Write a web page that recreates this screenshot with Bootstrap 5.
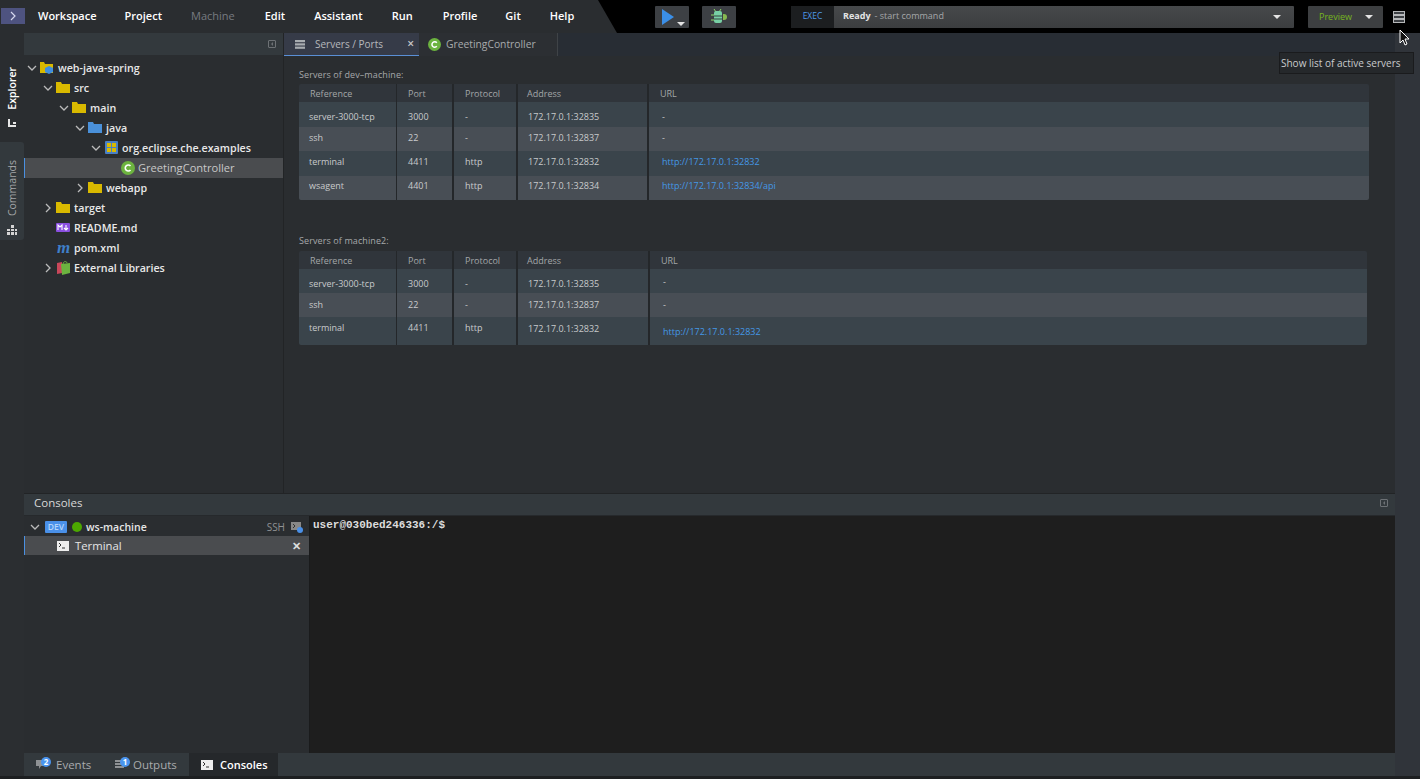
<!DOCTYPE html>
<html lang="en">
<head>
<meta charset="utf-8">
<title>Eclipse Che</title>
<link rel="stylesheet" href="https://cdn.jsdelivr.net/npm/bootstrap@5.3.0/dist/css/bootstrap.min.css">
<style>
html,body{height:100%;margin:0;overflow:hidden;background:#24272a}
body{font-family:"Open Sans","Liberation Sans",sans-serif;font-size:12px;color:#dbdbdb;line-height:1.2}
.ide-root{width:1420px;height:779px;position:relative;overflow:hidden}
.top-strip{height:33px;background:#000}
.menu-zone{width:617px;height:33px;background:#2a2d30;clip-path:polygon(0 0,598px 0,617px 33px,0 33px);padding-left:1px;flex:none}
.menu-toggle{width:24px;height:16px;margin:8px 0 0;background:#4e5380;color:#d5d8ee;display:flex;align-items:center;justify-content:center}
.menu-list{height:33px;padding-bottom:2px}
.menu-entry{font-size:11px;font-weight:600;color:#fff;white-space:nowrap}
.menu-entry.off{color:#777b80;font-weight:400}
.tool-btn{height:22px;background:#3d4044;display:flex;align-items:center;justify-content:center;position:relative;border-radius:1px}
.exec-box{height:22px;margin-left:55px;background:linear-gradient(#47494b,#3c3e40);display:flex;align-items:center;color:#a5a7a9;font-size:9px;border-radius:1px}
.exec-tag{height:22px;background:#1c1e20;color:#4f9ae8;font-size:8.500px;display:flex;align-items:center;justify-content:center}
.tri-down{width:0;height:0;border-left:4px solid transparent;border-right:4px solid transparent;border-top:4px solid #e4e4e4;display:block}
.preview-box{height:22px;background:#3d3f41;color:#76b520;font-size:9px;display:flex;align-items:center;border-radius:1px}
.main-zone{height:743px}
.side-rail{width:24px;background:#2b2e31;flex:none}
.rail-tab{width:24px;display:flex;flex-direction:column;align-items:center}
.rail-tab.act{height:109px;padding-top:34px;background:#2a2d30;color:#fff}
.rail-tab.idle{height:98px;padding-top:18px;background:#33393d;color:#a4a6a8;border-radius:0 3px 3px 0}
.rail-word{writing-mode:vertical-rl;transform:rotate(180deg);font-size:10.500px}
.rail-tab.act .rail-word{font-weight:600}
.work-col{flex:1;min-width:0}
.upper-zone{height:460px}
.tree-pane{width:260px;background:#2a2d30;border-right:1px solid #222426;flex:none;display:flex;flex-direction:column}
.tree-head{height:22px;background:#33393d;display:flex;justify-content:flex-end;align-items:center;padding-right:7px;flex:none}
.mini-box{width:8px;height:8px;border:1px solid #6d7175;border-radius:1px;display:block;position:relative}
.mini-box::after{content:"";position:absolute;left:2px;top:1px;width:0;height:0;border-top:2px solid transparent;border-bottom:2px solid transparent;border-right:2px solid #6d7175}
.tree-list{padding-top:3px}
.tree-row{height:20px;display:flex;align-items:center;color:#e8e8e8;font-size:10.700px;font-weight:600;white-space:nowrap}
.tree-row.sel{background:#4a4c4f;color:#c8c8c8;border-left:1px solid #4a90e2;width:259px}
.chev{width:16px;display:flex;justify-content:center;flex:none}
.node-icon{width:15px;height:14px;margin-right:3px;flex:none;display:block}
.pom-letter{width:15px;margin-right:3px;color:#3f7fc9;font:italic 700 17px/14px "Liberation Serif",serif;text-align:center;flex:none}
.editor-pane{flex:1;min-width:0;background:#2a2d30;display:flex;flex-direction:column}
.tab-strip{height:23px;background:#282d34;display:flex;flex:none}
.ed-tab{display:flex;align-items:center;height:23px;color:#b6b9bc;font-size:10px}
.ed-tab.on{width:135px;background:#363b48;border-bottom:1px solid #5a8fd6;padding-left:11px;position:relative}
.ed-tab.two{width:139px;background:#2c2f33;padding-left:9px;border-right:1px solid #3f4347;font-size:10.300px;color:#a8abad}
.ed-tab .xmark{position:absolute;right:5px;top:4px;font-size:12px;line-height:14px;color:#c8c8c8;font-weight:600}
.server-area{flex:1;padding:0 0 0 15px;font-size:9px;color:#b3b5b7}
.srv-title{height:13px;font-size:9px;letter-spacing:.1px;color:#a6a8aa;line-height:13px}
.srv-table{border-collapse:separate;border-spacing:0;table-layout:fixed;font-size:9px;color:#c8cacc;border-radius:2px;overflow:hidden}
.srv-table th{height:18px;padding:2px 0 0 11px;background:#30353b;color:#a3a6a8;font-weight:400;border-right:2px solid #24272a}
.srv-table td{padding:0 0 0 10px;border-right:2px solid #24272a}
.srv-table th:last-child,.srv-table td:last-child{border-right:0}
.srv-table tr.dk td{background:#3a444b}
.srv-table tr.lt td{background:#484e55}
.srv-table th:first-child,.srv-table td:first-child{border-right-width:1px}
.srv-table td:nth-child(2),.srv-table td:nth-child(3){padding-left:11px}
.srv-table th:nth-child(4){padding-left:9px}
.srv-table td:last-child{padding-left:13px}
.srv-table td.up1{padding-bottom:2px}
.srv-table td.up2{padding-bottom:4px}
.srv-table td.up3{padding-bottom:6px}
.srv-table td.dn1{padding-top:2px}
.srv-table td.dn3{padding-top:6px}
.srv-table td.wsl{padding-left:10px}
.srv-link{color:#4498e6;text-decoration:none}
.lower-zone{height:283px;background:#2a2d30;display:flex;flex-direction:column;border-top:1px solid #222426}
.cons-head{height:22px;background:#33393d;display:flex;align-items:center;justify-content:space-between;padding:0 7px 3px 10px;color:#d8d8d8;font-size:11.500px;flex:none;border-bottom:1px solid #26292c}
.cons-body{flex:1;min-height:0}
.cons-tree{width:286px;flex:none;background:#2a2d30;border-right:1px solid #1a1b1c}
.cons-row{height:20px;padding-top:2px;display:flex;align-items:center;font-size:10.500px;color:#e6e6e6;font-weight:600}
.cons-sel{height:19px;background:#4a4c4f;border-left:1px solid #4a90e2;display:flex;align-items:center;font-size:11.300px;color:#e6e6e6}
.dev-tag{width:22px;height:12px;background:#4a90e8;color:#b5d5fa;font-size:8.500px;border-radius:1px;text-align:center;line-height:12px;margin-right:5px;font-weight:600;margin-left:-1px}
.status-dot{width:10px;height:10px;border-radius:50%;background:#4ca800;margin-right:4px}
.term-view{flex:1;background:#1e1e1e;font-family:"Liberation Mono","DejaVu Sans Mono",monospace;font-size:11px;font-weight:700;color:#dcdcdc;padding:3px 3px;line-height:13px}
.term-ico{width:12px;height:10px;background:#eee;display:block;flex:none}
.bottom-tabs{height:23px;background:#33393d;display:flex;font-size:11.500px;color:#a9abad;flex:none}
.bot-tab{display:flex;align-items:center;height:23px;position:relative}
.bot-tab.on{background:#25282b;color:#fff;font-weight:600;width:89px;padding-left:12px;font-size:11px}
.pill{width:10px;height:10px;border-radius:50%;background:#4a94ee;color:#fff;font-size:8px;line-height:10px;text-align:center;position:absolute;font-weight:700}
.right-rail{width:25px;background:#30343a;flex:none}
.base-line{height:3px;background:#1d1f21;position:absolute;left:0;right:0;bottom:0}
.hint-pop{position:absolute;left:1279px;top:52px;width:135px;height:22px;background:#25282b;border:1px solid #1a1b1d;font-size:10px;color:#c9cbcd;line-height:20px;padding-left:1px;white-space:nowrap}
.cursor-art{position:absolute;left:1399px;top:29px;width:12px;height:18px}
</style>
</head>
<body>
<div class="ide-root">
  <header class="top-strip d-flex">
    <nav class="menu-zone d-flex">
      <div class="menu-toggle"><svg width="6" height="10" viewBox="0 0 6 10"><path d="M1 1l4 4-4 4" fill="none" stroke="#d5d8ee" stroke-width="1.2"/></svg></div>
      <div class="menu-list d-flex align-items-center">
        <span class="menu-entry" style="margin-left:13px">Workspace</span>
        <span class="menu-entry" style="margin-left:28px">Project</span>
        <span class="menu-entry off" style="margin-left:29px">Machine</span>
        <span class="menu-entry" style="margin-left:30px">Edit</span>
        <span class="menu-entry" style="margin-left:29px">Assistant</span>
        <span class="menu-entry" style="margin-left:29px">Run</span>
        <span class="menu-entry" style="margin-left:30px">Profile</span>
        <span class="menu-entry" style="margin-left:28px">Git</span>
        <span class="menu-entry" style="margin-left:29px">Help</span>
      </div>
    </nav>
    <div class="d-flex align-items-center" style="height:33px;padding-left:38px">
      <div class="tool-btn" style="width:34px">
        <svg width="14" height="16" viewBox="0 0 14 16" style="margin-right:9px"><path d="M1 0l12 8-12 8z" fill="#3b8fe8"/></svg>
        <span class="tri-down" style="position:absolute;right:4px;bottom:2px"></span>
      </div>
      <div class="tool-btn" style="width:34px;margin-left:13px">
        <svg width="20" height="16" viewBox="0 0 20 16"><path d="M5 0l2 3M12 0l-2 3M2 6h3M2 11h3" stroke="#8fdc6a" stroke-width="1"/><rect x="5" y="2" width="8" height="12" rx="2" fill="#78d0a5"/><path d="M5 7h8M5 10h8" stroke="#37443f" stroke-width="1"/><path d="M14 5h1a3 3 0 0 1 0 6h-1z" fill="#86b850"/></svg>
      </div>
      <div class="exec-box" style="width:503px">
        <span class="exec-tag" style="width:43px">EXEC</span>
        <span style="margin-left:9px;color:#e4e4e4;font-weight:700">Ready</span>
        <span style="margin-left:4px">- start command</span>
        <span class="tri-down ms-auto" style="margin-right:13px"></span>
      </div>
      <div class="preview-box" style="width:75px;margin-left:14px">
        <span style="margin-left:11px;padding-top:1px">Preview</span>
        <span class="tri-down ms-auto" style="margin-right:10px"></span>
      </div>
      <svg width="12" height="12" viewBox="0 0 12 12" style="margin-left:10px"><g fill="#3d4044" stroke="#b5b7b9"><rect x=".5" y=".5" width="11" height="3"/><rect x=".5" y="4.500" width="11" height="3"/><rect x=".5" y="8.500" width="11" height="3"/></g></svg>
    </div>
  </header>

  <div class="main-zone d-flex">
    <aside class="side-rail">
      <div class="rail-tab act">
        <span class="rail-word">Explorer</span>
        <svg width="10" height="10" viewBox="0 0 10 10" style="margin-top:9px"><g fill="#e6e6e6"><rect x="1" y="0" width="2" height="8"/><rect x="1" y="6" width="8" height="2"/><rect x="6" y="3" width="3" height="2"/></g></svg>
      </div>
      <div class="rail-tab idle">
        <span class="rail-word">Commands</span>
        <svg width="10" height="10" viewBox="0 0 10 10" style="margin-top:9px"><g fill="#d5d5d5"><rect x="4" y="0" width="3" height="3"/><rect x="0" y="4" width="3" height="2"/><rect x="4" y="4" width="3" height="2"/><rect x="8" y="4" width="2" height="2"/><rect x="0" y="7" width="3" height="3"/><rect x="4" y="7" width="3" height="3"/><rect x="8" y="7" width="2" height="3"/></g></svg>
      </div>
    </aside>

    <div class="work-col d-flex flex-column">
      <div class="upper-zone d-flex">
        <section class="tree-pane">
          <div class="tree-head"><span class="mini-box"></span></div>
          <div class="tree-list">
            <div class="tree-row"><span class="chev"><svg width="10" height="6" viewBox="0 0 10 6"><path d="M1 1l4 4 4-4" fill="none" stroke="#bbb" stroke-width="1.3"/></svg></span><svg class="node-icon" viewBox="0 0 15 14"><path d="M0 1h4l1 2h8v9H0z" fill="#d9b900"/><path d="M9 5l4 2v4l-4 2-4-2V7z" fill="#3f8fe0"/></svg><span>web-java-spring</span></div>
            <div class="tree-row" style="padding-left:16px"><span class="chev"><svg width="10" height="6" viewBox="0 0 10 6"><path d="M1 1l4 4 4-4" fill="none" stroke="#bbb" stroke-width="1.3"/></svg></span><svg class="node-icon" viewBox="0 0 15 14"><path d="M0 1h5l1 2h8v9H0z" fill="#d9b900"/></svg><span>src</span></div>
            <div class="tree-row" style="padding-left:32px"><span class="chev"><svg width="10" height="6" viewBox="0 0 10 6"><path d="M1 1l4 4 4-4" fill="none" stroke="#bbb" stroke-width="1.3"/></svg></span><svg class="node-icon" viewBox="0 0 15 14"><path d="M0 1h5l1 2h8v9H0z" fill="#d9b900"/></svg><span>main</span></div>
            <div class="tree-row" style="padding-left:48px"><span class="chev"><svg width="10" height="6" viewBox="0 0 10 6"><path d="M1 1l4 4 4-4" fill="none" stroke="#bbb" stroke-width="1.3"/></svg></span><svg class="node-icon" viewBox="0 0 15 14"><path d="M0 1h5l1 2h8v9H0z" fill="#4a90d9"/></svg><span>java</span></div>
            <div class="tree-row" style="padding-left:64px"><span class="chev"><svg width="10" height="6" viewBox="0 0 10 6"><path d="M1 1l4 4 4-4" fill="none" stroke="#bbb" stroke-width="1.3"/></svg></span><svg class="node-icon" viewBox="0 0 15 14"><rect x="1" y="0" width="13" height="13" rx="1" fill="#4a7fc4"/><path d="M3 2h4v4H3zM8 2h4v4H8zM3 7h4v4H3zM8 7h4v4H8z" fill="#d9b900"/></svg><span>org.eclipse.che.examples</span></div>
            <div class="tree-row sel" style="padding-left:96px"><svg class="node-icon" style="width:14px;height:14px" viewBox="0 0 14 14"><circle cx="7" cy="7" r="7" fill="#6cb33f"/><path d="M9.500 5a3 3 0 1 0 0 4" fill="none" stroke="#fff" stroke-width="1.600"/></svg><span style="font-weight:400;font-size:11.100px">GreetingController</span></div>
            <div class="tree-row" style="padding-left:48px"><span class="chev"><svg width="6" height="10" viewBox="0 0 6 10"><path d="M1 1l4 4-4 4" fill="none" stroke="#bbb" stroke-width="1.3"/></svg></span><svg class="node-icon" viewBox="0 0 15 14"><path d="M0 1h5l1 2h8v9H0z" fill="#d9b900"/></svg><span>webapp</span></div>
            <div class="tree-row" style="padding-left:16px"><span class="chev"><svg width="6" height="10" viewBox="0 0 6 10"><path d="M1 1l4 4-4 4" fill="none" stroke="#bbb" stroke-width="1.3"/></svg></span><svg class="node-icon" viewBox="0 0 15 14"><path d="M0 1h5l1 2h8v9H0z" fill="#d9b900"/></svg><span>target</span></div>
            <div class="tree-row" style="padding-left:32px"><svg class="node-icon" viewBox="0 0 15 14"><rect x="0" y="2" width="14" height="9" rx="1" fill="#8a4fe0"/><path d="M2 9V4l2 2 2-2v5M10 4v5M8 7l2 2 2-2" stroke="#fff" stroke-width="1.100" fill="none"/></svg><span>README.md</span></div>
            <div class="tree-row" style="padding-left:32px"><span class="pom-letter">m</span><span>pom.xml</span></div>
            <div class="tree-row" style="padding-left:16px"><span class="chev"><svg width="6" height="10" viewBox="0 0 6 10"><path d="M1 1l4 4-4 4" fill="none" stroke="#bbb" stroke-width="1.3"/></svg></span><svg class="node-icon" viewBox="0 0 15 14"><path d="M1 2l5-1v11l-5 1z" fill="#c9475a"/><path d="M5 3l9-1v10l-8 2z" fill="#6cb33f"/><path d="M7 3c0-3 4-3 4-1" fill="none" stroke="#6cb33f"/></svg><span>External Libraries</span></div>
          </div>
        </section>

        <section class="editor-pane">
          <div class="tab-strip">
            <div class="ed-tab on">
              <svg width="10" height="9" viewBox="0 0 10 9" style="margin-right:10px"><g fill="#a8acb0"><rect y="0" width="10" height="2.200"/><rect y="3.300" width="10" height="2.200"/><rect y="6.600" width="10" height="2.200"/></g></svg>
              <span>Servers / Ports</span><span class="xmark">×</span>
            </div>
            <div class="ed-tab two">
              <svg width="13" height="13" viewBox="0 0 14 14" style="margin-right:5px;flex:none"><circle cx="7" cy="7" r="7" fill="#6cb33f"/><path d="M9.500 5a3 3 0 1 0 0 4" fill="none" stroke="#fff" stroke-width="1.600"/></svg>
              <span>GreetingController</span>
            </div>
          </div>
          <div class="server-area">
            <div class="srv-title" style="margin-top:12px;margin-bottom:3px">Servers of dev–machine:</div>
            <table class="srv-table" style="width:1070px">
              <colgroup><col style="width:98px"><col style="width:57px"><col style="width:64px"><col style="width:131px"><col></colgroup>
              <thead><tr><th>Reference</th><th>Port</th><th>Protocol</th><th>Address</th><th>URL</th></tr></thead>
              <tbody>
                <tr class="dk" style="height:25px"><td class="dn3">server-3000-tcp</td><td class="dn3">3000</td><td class="dn3">-</td><td class="dn3">172.17.0.1:32835</td><td class="dn3">-</td></tr>
                <tr class="lt" style="height:24px"><td class="up1">ssh</td><td class="up1">22</td><td class="up1">-</td><td class="up1">172.17.0.1:32837</td><td class="up1">-</td></tr>
                <tr class="dk" style="height:25px"><td class="up1">terminal</td><td class="up1">4411</td><td class="up1">http</td><td class="up1">172.17.0.1:32832</td><td class="up1"><a class="srv-link" href="#">http://172.17.0.1:32832</a></td></tr>
                <tr class="lt" style="height:24px"><td class="up2 wsl">wsagent</td><td class="up2">4401</td><td class="up2">http</td><td class="up2">172.17.0.1:32834</td><td class="up2"><a class="srv-link" href="#">http://172.17.0.1:32834/api</a></td></tr>
              </tbody>
            </table>
            <div class="srv-title" style="margin-top:34px;margin-bottom:4px">Servers of machine2:</div>
            <table class="srv-table" style="width:1068px">
              <colgroup><col style="width:98px"><col style="width:57px"><col style="width:64px"><col style="width:132px"><col></colgroup>
              <thead><tr><th>Reference</th><th>Port</th><th>Protocol</th><th>Address</th><th>URL</th></tr></thead>
              <tbody>
                <tr class="dk" style="height:24px"><td class="dn3">server-3000-tcp</td><td class="dn3">3000</td><td class="dn3">-</td><td class="dn3">172.17.0.1:32835</td><td class="dn1">-</td></tr>
                <tr class="lt" style="height:24px"><td>ssh</td><td>22</td><td>-</td><td>172.17.0.1:32837</td><td>-</td></tr>
                <tr class="dk" style="height:28px"><td class="up3">terminal</td><td class="up3">4411</td><td class="up3">http</td><td class="up2">172.17.0.1:32832</td><td class="dn1"><a class="srv-link" href="#">http://172.17.0.1:32832</a></td></tr>
              </tbody>
            </table>
          </div>
        </section>
      </div>

      <div class="lower-zone">
        <div class="cons-head"><span>Consoles</span><span class="mini-box"></span></div>
        <div class="cons-body d-flex">
          <div class="cons-tree">
            <div class="cons-row">
              <span class="chev" style="width:22px"><svg width="10" height="6" viewBox="0 0 10 6"><path d="M1 1l4 4 4-4" fill="none" stroke="#bbb" stroke-width="1.3"/></svg></span>
              <span class="dev-tag">DEV</span><span class="status-dot"></span><span>ws-machine</span>
              <span class="ms-auto" style="color:#8f9193;font-weight:400;font-size:10px;margin-right:6px">SSH</span>
              <svg width="12" height="11" viewBox="0 0 12 11" style="margin-right:6px"><rect x="0" y="0" width="10" height="8" fill="#888"/><path d="M2 2l2 2-2 2" stroke="#333" fill="none"/><circle cx="9" cy="8" r="3" fill="#4a90e8"/></svg>
            </div>
            <div class="cons-sel">
              <span class="term-ico" style="margin-left:32px;margin-right:6px"><svg style="display:block" width="12" height="10" viewBox="0 0 12 10"><path d="M2 2l2 2-2 2M5 7h3" stroke="#333" fill="none"/></svg></span>
              <span>Terminal</span>
              <span class="ms-auto" style="margin-right:8px;font-size:11px;line-height:1;color:#ddd;font-weight:700">✕</span>
            </div>
          </div>
          <div class="term-view">user@030bed246336:/$</div>
        </div>
        <div class="bottom-tabs">
          <div class="bot-tab" style="width:79px;padding-left:32px">
            <svg width="11" height="11" viewBox="0 0 11 11" style="position:absolute;left:12px;top:6px"><path d="M0 1h9v6H5l-2 3V7H0z" fill="#8e9194"/></svg>
            <span class="pill" style="left:17px;top:4px">2</span>
            <span>Events</span>
          </div>
          <div class="bot-tab" style="width:86px;padding-left:30px">
            <svg width="11" height="10" viewBox="0 0 11 10" style="position:absolute;left:12px;top:7px"><g fill="#8e9194"><rect y="0" width="9" height="2"/><rect y="3" width="9" height="2"/><rect y="6" width="9" height="2"/></g></svg>
            <span class="pill" style="left:17px;top:4px">1</span>
            <span>Outputs</span>
          </div>
          <div class="bot-tab on">
            <span class="term-ico" style="margin-right:7px"><svg style="display:block" width="12" height="10" viewBox="0 0 12 10"><path d="M2 2l2 2-2 2M5 7h3" stroke="#333" fill="none"/></svg></span>
            <span>Consoles</span>
          </div>
        </div>
      </div>
    </div>

    <aside class="right-rail"></aside>
  </div>
  <div class="base-line"></div>

  <div class="hint-pop">Show list of active servers</div>
  <svg class="cursor-art" viewBox="0 0 12 18"><path d="M1 1v13l3-3 2 5 2-1-2-5h4z" fill="#111" stroke="#fff" stroke-width="1"/></svg>
</div>
<script src="https://cdn.jsdelivr.net/npm/bootstrap@5.3.0/dist/js/bootstrap.bundle.min.js"></script>
</body>
</html>
